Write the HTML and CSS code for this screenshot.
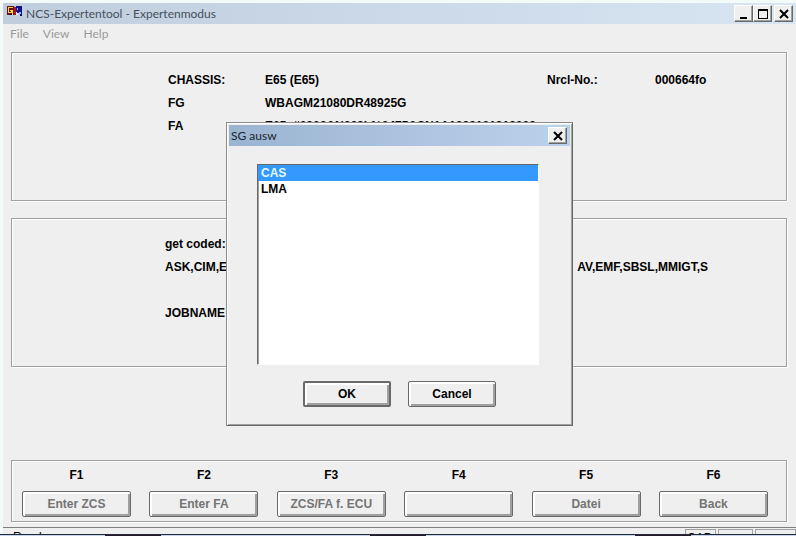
FILE: index.html
```html
<!DOCTYPE html>
<html lang="de">
<head>
<meta charset="utf-8">
<title>NCS-Expertentool - Expertenmodus</title>
<link rel="stylesheet" href="styles.css">
</head>
<body>
<div class="window">
  <header class="titlebar">
    <svg class="app-icon" width="16" height="12" viewBox="0 0 16 12" shape-rendering="crispEdges" aria-hidden="true">
      <rect x="0" y="0" width="7" height="9" fill="#6b1020"/>
      <path d="M1 1h5v1H2v4h2V5H3V4h3v5H5V7H1z" fill="#ffd83a"/>
      <path d="M7 1h4v8H7z" fill="#e9e4ff"/>
      <path d="M7 1h2v3h2v2H9v3H7z" fill="#b0102c"/>
      <path d="M9 0h6v9h-2V7h-3V5H9z" fill="#12128c"/>
      <path d="M10 2h1v2h-1zM12 6h2v2h-2z" fill="#8fb8ff"/>
      <path d="M13 9h2v1h-2zM3 8h2v1H3z" fill="#0a0a50"/>
    </svg>
    <h1 class="title">NCS-Expertentool - Expertenmodus</h1>
    <div class="window-controls">
      <button class="control" type="button" aria-label="Minimize"><svg width="16" height="14" viewBox="0 0 16 14" shape-rendering="crispEdges"><path d="M4 10h7v2H4z"/></svg></button>
      <button class="control" type="button" aria-label="Maximize"><svg width="16" height="14" viewBox="0 0 16 14" shape-rendering="crispEdges"><path d="M3 2h10v10H3zM4 4v7h8V4z" fill-rule="evenodd"/></svg></button>
      <button class="control control-close" type="button" aria-label="Close"><svg width="16" height="14" viewBox="0 0 16 14"><path d="M4 3l8 8M12 3l-8 8" fill="none" stroke="#000" stroke-width="2"/></svg></button>
    </div>
  </header>
  <nav class="menubar">
    <a href="#file">File</a>
    <a href="#view">View</a>
    <a href="#help">Help</a>
  </nav>

  <main class="content">
    <section class="panel vehicle">
      <dl class="fields">
        <dt>CHASSIS:</dt><dd>E65 (E65)</dd>
        <dt>Nrcl-No.:</dt><dd>000664fo</dd>
        <dt>FG</dt><dd class="wide">WBAGM21080DR48925G</dd>
        <dt>FA</dt><dd class="wide">E65_#0906&amp;N668L%0475&amp;SN1A1089101919009</dd>
      </dl>
    </section>
    <section class="panel job">
      <p>get coded:</p>
      <p class="ecus"><span>ASK,CIM,E</span><span>AV,EMF,SBSL,MMIGT,S</span></p>
      <p class="jobname">JOBNAME</p>
    </section>
    <section class="panel keys">
      <div class="key"><label for="f1">F1</label><button class="button" id="f1" type="button" disabled>Enter ZCS</button></div>
      <div class="key"><label for="f2">F2</label><button class="button" id="f2" type="button" disabled>Enter FA</button></div>
      <div class="key"><label for="f3">F3</label><button class="button" id="f3" type="button" disabled>ZCS/FA f. ECU</button></div>
      <div class="key"><label for="f4">F4</label><button class="button" id="f4" type="button" disabled></button></div>
      <div class="key"><label for="f5">F5</label><button class="button" id="f5" type="button" disabled>Datei</button></div>
      <div class="key"><label for="f6">F6</label><button class="button" id="f6" type="button" disabled>Back</button></div>
    </section>
  </main>

  <footer class="statusbar">
    <span class="status-text">Ready</span>
    <span class="status-cell">CAP</span>
    <span class="status-cell medium"></span>
    <span class="status-cell last"></span>
  </footer>

  <section class="dialog" role="dialog" aria-labelledby="dialog-title">
    <header class="dialog-titlebar">
      <h2 class="title" id="dialog-title">SG ausw</h2>
      <button class="control" type="button" aria-label="Close"><svg width="16" height="14" viewBox="0 0 16 14"><path d="M4 3l8 8M12 3l-8 8" fill="none" stroke="#000" stroke-width="2"/></svg></button>
    </header>
    <form class="dialog-body">
      <select class="list" size="12" aria-labelledby="dialog-title">
        <option selected>CAS</option>
        <option>LMA</option>
      </select>
      <div class="dialog-actions">
        <button class="button default" type="button">OK</button>
        <button class="button" type="button">Cancel</button>
      </div>
    </form>
  </section>
</div>
<div class="taskbar"><span class="task"></span><span class="task"></span><span class="task"></span></div>
</body>
</html>
```
FILE: styles.css
```css
* {
  box-sizing: border-box;
}

body {
  margin: 0;
  height: 100vh;
  display: flex;
  flex-direction: column;
  overflow: hidden;
  background: #f3fafa;
  color: #000;
  font: bold 12px/16px "Liberation Sans", Arial, sans-serif;
}

h1, h2, p, dl, dd {
  margin: 0;
}

.window {
  position: relative;
  flex: 1;
  min-height: 0;
  display: flex;
  flex-direction: column;
  margin: 3px 0 0 3px;
  overflow: hidden;
  background: #efefef;
}

.titlebar {
  display: flex;
  align-items: center;
  height: 21px;
  padding: 0 3px 0 4px;
  background: linear-gradient(90deg, #bfcddd, #d8e5f3);
  color: #46505c;
}

.app-icon {
  margin-bottom: 3px;
}

.title {
  flex: 1;
  font: 12px/16px Lato, "Open Sans", sans-serif;
}

.titlebar .title {
  margin-left: 3px;
}

.window-controls {
  display: flex;
}

.control {
  display: flex;
  align-items: center;
  justify-content: center;
  width: 19px;
  height: 17px;
  padding: 0;
  border: 1px solid;
  border-color: #fff #696969 #696969 #fff;
  box-shadow: inset -1px -1px #a0a0a0;
  background: #efefef;
}

.control-close {
  margin-left: 2px;
}

.menubar {
  display: flex;
  gap: 14px;
  padding: 2px 7px;
  font: 12px/16px Lato, "Open Sans", sans-serif;
}

.menubar a {
  color: #9a9a9a;
  text-decoration: none;
}

.content {
  flex: 1;
  display: flex;
  flex-direction: column;
  padding: 8px 9px 5px 8px;
}

.panel {
  border: 1px solid #a0a0a0;
  box-shadow: inset 1px 1px #fff, 1px 1px #fff;
}

.vehicle {
  height: 149px;
  padding: 19px 47px 0 156px;
}

.fields {
  display: grid;
  grid-template-columns: 97px 1fr 108px 84px;
  row-gap: 7px;
}

.fields .wide {
  grid-column: span 3;
}

.job {
  height: 149px;
  margin-top: 17px;
  padding: 17px 78px 0 153px;
  display: flex;
  flex-direction: column;
  gap: 7px;
}

.ecus {
  display: flex;
  justify-content: space-between;
}

.jobname {
  margin-top: 23px;
}

.keys {
  display: flex;
  justify-content: space-between;
  height: 62px;
  margin-top: auto;
  padding: 6px 18px 0 10px;
}

.key {
  display: flex;
  flex-direction: column;
  align-items: center;
  gap: 8px;
}

.button {
  width: 109px;
  height: 26px;
  padding: 0;
  border: 1px solid #696969;
  border-radius: 2px;
  box-shadow: inset 2px 2px #fff, inset -2px -2px #a0a0a0;
  background: #efefef;
  color: #000;
  font: inherit;
}

.button:disabled {
  color: #747474;
}

.statusbar {
  display: flex;
  align-items: flex-start;
  gap: 2px;
  height: 7px;
  border-top: 1px solid #808080;
  overflow: hidden;
  font-weight: normal;
}

.status-text {
  flex: 1;
  padding-left: 10px;
  margin-top: 1px;
}

.status-cell {
  width: 31px;
  height: 16px;
  margin-top: 1px;
  padding-left: 1px;
  border: 1px solid #a0a0a0;
}

.status-cell.medium {
  width: 35px;
}

.status-cell.last {
  width: 41px;
}

.taskbar {
  display: flex;
  justify-content: space-around;
  height: 2px;
  border-top: 1px solid #202a3c;
  background: #c7d5e8;
}

.task {
  width: 56px;
  background: #2a1a28;
}

.dialog {
  position: absolute;
  top: 119px;
  left: 0;
  right: 0;
  width: 347px;
  margin: 0 auto;
  padding: 2px;
  border: 1px solid #8c8c8c;
  border-right-color: #696969;
  border-bottom-color: #696969;
  box-shadow: inset 1px 1px #fff, inset -1px -1px #a0a0a0;
  background: #efefef;
}

.dialog-titlebar {
  display: flex;
  align-items: center;
  height: 21px;
  padding: 0 3px 0 2px;
  background: linear-gradient(90deg, #9bb4d1, #bbd2ec);
  color: #1b2430;
}

.dialog-body {
  padding: 18px 31px 16px 28px;
}

.list {
  display: block;
  width: 100%;
  height: 201px;
  padding: 0;
  border: 1px solid;
  border-color: #696969 #fff #fff #696969;
  border-radius: 0;
  box-shadow: inset 1px 0 #a0a0a0;
  background: #fff;
  color: #000;
  font: inherit;
  outline: none;
  overflow: hidden;
}

.list option {
  min-height: 0;
  padding: 1px 3px;
  font: bold 12px/16px "Liberation Sans", Arial, sans-serif;
}

.list option:checked {
  background: linear-gradient(#3399ff, #3399ff);
  color: #e4f8ff;
}

.dialog-actions {
  display: flex;
  justify-content: center;
  gap: 17px;
  margin-top: 16px;
  padding-left: 3px;
}

.dialog-actions .button {
  width: 88px;
}

.dialog-actions .default {
  border-width: 2px;
}
```
